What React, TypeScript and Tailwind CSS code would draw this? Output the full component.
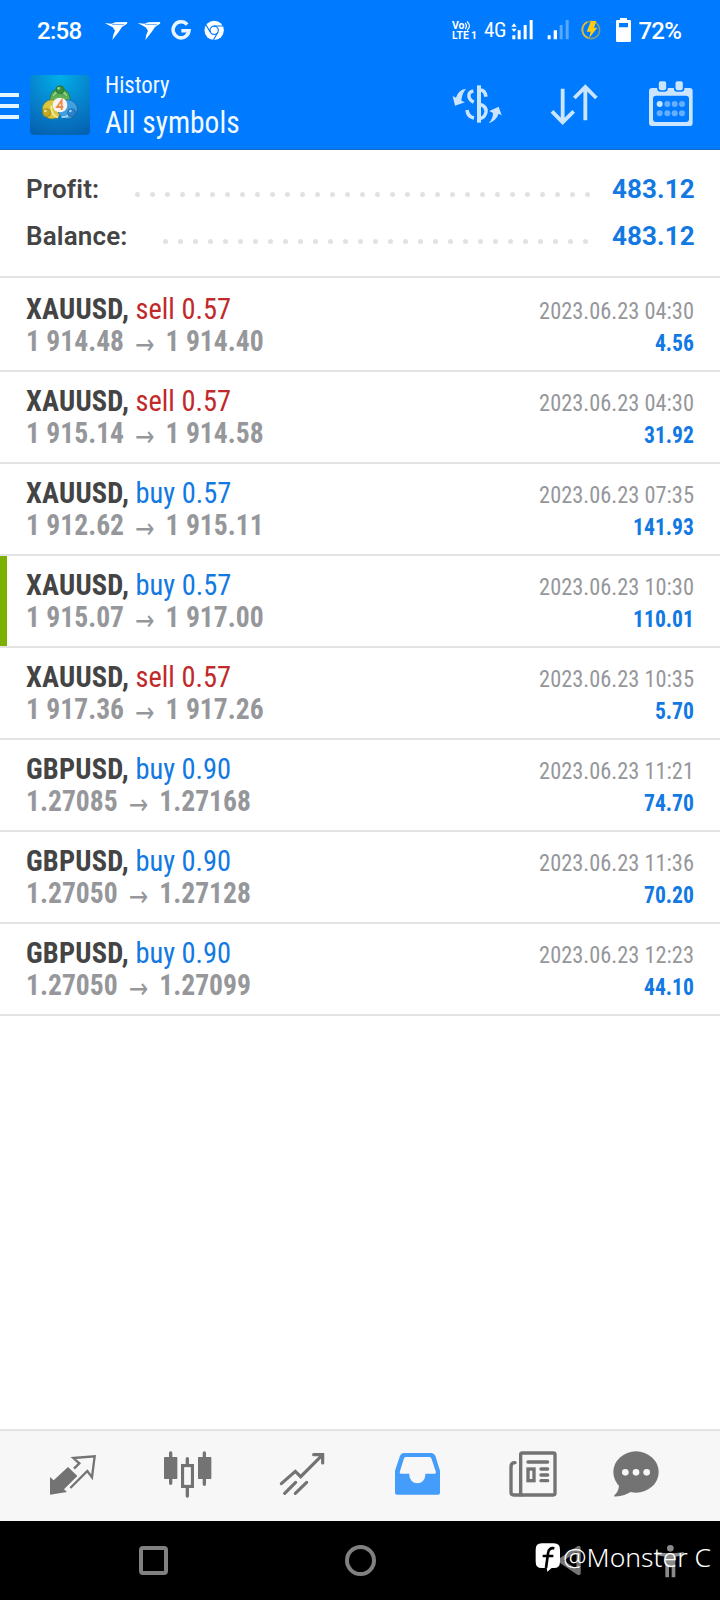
import type { ReactNode } from 'react';

type Deal = {
  symbol: string;
  side: 'buy' | 'sell';
  volume: string;
  open: string;
  close: string;
  time: string;
  profit: string;
  marked?: boolean;
};

const deals: Deal[] = [
  { symbol: 'XAUUSD', side: 'sell', volume: '0.57', open: '1 914.48', close: '1 914.40', time: '2023.06.23 04:30', profit: '4.56' },
  { symbol: 'XAUUSD', side: 'sell', volume: '0.57', open: '1 915.14', close: '1 914.58', time: '2023.06.23 04:30', profit: '31.92' },
  { symbol: 'XAUUSD', side: 'buy', volume: '0.57', open: '1 912.62', close: '1 915.11', time: '2023.06.23 07:35', profit: '141.93' },
  { symbol: 'XAUUSD', side: 'buy', volume: '0.57', open: '1 915.07', close: '1 917.00', time: '2023.06.23 10:30', profit: '110.01', marked: true },
  { symbol: 'XAUUSD', side: 'sell', volume: '0.57', open: '1 917.36', close: '1 917.26', time: '2023.06.23 10:35', profit: '5.70' },
  { symbol: 'GBPUSD', side: 'buy', volume: '0.90', open: '1.27085', close: '1.27168', time: '2023.06.23 11:21', profit: '74.70' },
  { symbol: 'GBPUSD', side: 'buy', volume: '0.90', open: '1.27050', close: '1.27128', time: '2023.06.23 11:36', profit: '70.20' },
  { symbol: 'GBPUSD', side: 'buy', volume: '0.90', open: '1.27050', close: '1.27099', time: '2023.06.23 12:23', profit: '44.10' },
];

function BirdIcon() {
  return (
    <svg viewBox="0 0 72 72" className="size-6" fill="#fff">
      <path d="M2 15 L22 17 L34 13 L70 12 L69 17 L62 22 L54 27 L44 42 L25 66 L28 50 L33 38 L26 28Z" />
      <path d="M24 19 L60 20" stroke="#007aff" strokeWidth="1.8" />
    </svg>
  );
}

function GoogleIcon() {
  return (
    <svg viewBox="0 0 72 72" className="size-6" fill="none" stroke="#e9f6ff" strokeWidth="10.5">
      <path d="M51.5 20 A24 24 0 1 0 57 38.5 H34" />
    </svg>
  );
}

function ChromeIcon() {
  return (
    <svg viewBox="0 0 72 72" className="size-6">
      <circle cx="33.5" cy="37" r="29" fill="#fff" />
      <g fill="none" stroke="#007aff" strokeWidth="3.5">
        <circle cx="33.5" cy="37" r="12.5" />
        <path d="M33 24 H60 M22.5 43 L9 21 M44.5 43 L31 67" />
      </g>
    </svg>
  );
}

function StatusBar() {
  return (
    <div className="flex h-[60px] items-center pl-[37px] text-white">
      <span className="w-[66.5px] pt-px text-[24px] font-medium leading-none tracking-[-0.7px]">2:58</span>
      <div className="flex gap-[9px]">
        <BirdIcon />
        <BirdIcon />
        <GoogleIcon />
        <ChromeIcon />
      </div>
      <div className="ml-[225.5px] w-[32px] pt-px text-[10.5px] font-bold leading-[10px]">
        <div className="flex items-center">
          <span>Vo</span>
          <svg viewBox="0 0 8 10" className="h-[10px] w-2" fill="none" stroke="#fff" strokeWidth="1.2">
            <path d="M0 2 Q3 5 0 8 M2 .5 Q7 5 2 9.5" />
          </svg>
        </div>
        <div className="whitespace-nowrap">LTE<span className="ml-[2px]">1</span></div>
      </div>
      <span className="w-[27px] text-[21px] leading-none tracking-[-0.3px] font-stretch-condensed">4G</span>
      <svg viewBox="0 0 69 60" className="h-5 w-[23px]" fill="#fff">
        <path d="M1 20 L9 10 L17 20Z M1 26 H17 L9 36Z M4 46 H13 V58 H4Z M20 31 H29 V58 H20Z M38 15 H47 V58 H38Z M56 0 H65 V58 H56Z" />
      </svg>
      <svg viewBox="0 0 69 60" className="ml-[13px] h-5 w-[23px]" fill="#fff">
        <path d="M2 46 H11 V58 H2Z M20 31 H30 V58 H20Z" />
        <path d="M38 15 H47 V58 H38Z M56 0 H65 V58 H56Z" opacity=".35" />
      </svg>
      <svg viewBox="0 0 60 60" className="ml-[10.5px] size-5">
        <circle cx="30" cy="30" r="26" fill="none" stroke="#7f9d80" strokeWidth="5" />
        <path d="M18 6 Q3 15 4 31 Q6 48 22 54" fill="none" stroke="#d8bd3c" strokeWidth="5" />
        <path d="M30 3 H46 L39 23 H49 L24 55 L29 35 H17Z" fill="#ffcb14" />
      </svg>
      <svg viewBox="0 0 45 72" className="ml-[15px] h-6 w-[15px]" fill="#fff">
        <path fillRule="evenodd" d="M12 0 H33 V6 H41 Q45 6 45 10 V68 Q45 72 41 72 H4 Q0 72 0 68 V10 Q0 6 4 6 H12Z M9 15 V28 H36 V15Z" />
      </svg>
      <span className="ml-[8px] pt-px text-[24px] font-medium leading-none tracking-[-0.8px]">72%</span>
    </div>
  );
}

function AppLogo() {
  return (
    <svg viewBox="0 0 180 180" className="size-[60px]">
      <defs>
        <radialGradient id="tile" cx=".5" cy=".05" r="1">
          <stop offset="0" stopColor="#00aee8" />
          <stop offset=".55" stopColor="#0781cb" />
          <stop offset="1" stopColor="#0562b2" />
        </radialGradient>
        <linearGradient id="green" x1="0" y1="0" x2="0" y2="1">
          <stop offset="0" stopColor="#3d9b45" />
          <stop offset="1" stopColor="#8acb6a" />
        </linearGradient>
      </defs>
      <rect width="180" height="180" rx="12" fill="url(#tile)" />
      <circle cx="90" cy="70" r="30" fill="url(#green)" stroke="#1d6b3c" strokeWidth="2" />
      <path d="M70 62 Q78 46 90 56 Q102 46 110 62" fill="none" stroke="#a9dc95" strokeWidth="4" />
      <circle cx="66" cy="103" r="29" fill="#d9c63e" stroke="#7d7a24" strokeWidth="2" />
      <circle cx="113" cy="103" r="29" fill="#429fe0" stroke="#145b9b" strokeWidth="2" />
      <path d="M64 92 Q62 119 84 128" fill="none" stroke="#f1e796" strokeWidth="6" />
      <path d="M94 126 Q118 129 130 104" fill="none" stroke="#9ad4f7" strokeWidth="5" />
      <circle cx="90" cy="44" r="12" fill="#358f3e" stroke="#206737" strokeWidth="2" />
      <circle cx="50" cy="113" r="12" fill="#c4a923" stroke="#8c7a1c" strokeWidth="2" />
      <circle cx="125" cy="113" r="12" fill="#2d83cb" stroke="#175b9b" strokeWidth="2" />
      <circle cx="86" cy="40" r="4" fill="#a5d995" />
      <circle cx="46" cy="108" r="4" fill="#f5e68c" />
      <circle cx="121" cy="108" r="4" fill="#9dd6fa" />
      <circle cx="90" cy="90" r="22" fill="#f6f5f2" />
      <path d="M95 105 V76 L81 96 H100" fill="none" stroke="#ee8a4a" strokeWidth="5.5" />
    </svg>
  );
}

function AppHeader() {
  return (
    <div className="flex h-[90px] border-b border-[#1769c7] text-[#f2faff]">
      <div className="mt-[33px] flex w-[19px] flex-col gap-[7px]">
        <div className="h-1 bg-[#e3f6ff]" />
        <div className="h-1 bg-[#e3f6ff]" />
        <div className="h-1 bg-[#e3f6ff]" />
      </div>
      <div className="ml-[11px] mt-[15px] size-[60px]">
        <AppLogo />
      </div>
      <div className="ml-[15px] mt-[11px] w-[345px] shrink-0 font-stretch-condensed">
        <div className="origin-left scale-x-[0.95] text-[24px] leading-[28px]">History</div>
        <div className="mt-[5px] origin-left scale-x-[0.92] text-[32px] leading-[36px]">All symbols</div>
      </div>
      {/* viewBox units are thirds of a pixel */}
      <svg viewBox="270 234 165 156" className="mt-[18px] h-[52px] w-[55px] shrink-0" fill="none" stroke="#cbe5ff">
        <path d="M357 256 V368" strokeWidth="12" />
        <path d="M357 270 Q375 268 378 290 M340 273 Q324 276 327 291 Q329 300 341 307 M357 313 Q380 318 378 336 Q375 354 357 356 M321 330 Q323 350 342 354" strokeWidth="10.5" />
        <g fill="#cbe5ff" stroke="none">
          <path d="M318 267 Q297 267 288 293 L278 288 L285 317 L315 307 L304 302 Q305 282 318 267Z" />
          <path d="M386 370 Q409 361 416 341 L425 346 L416 320 L388 333 L399 339 Q399 356 386 370Z" />
        </g>
      </svg>
      <svg viewBox="564 234 156 156" className="ml-[43px] mt-[18px] size-[52px] shrink-0" fill="none" stroke="#cbe5ff" strokeWidth="11.5">
        <path d="M608 266 V368 M576 334 L608 367 L641 334 M676 361 V260 M643 294 L676 261 L709 294" />
      </svg>
      <svg viewBox="855 234 156 156" className="ml-[45px] mt-[18px] size-[52px] shrink-0" fill="#cbe5ff">
        <path fillRule="evenodd" d="M877 264 H989 Q998 264 998 273 V368 Q998 378 989 378 H877 Q867 378 867 368 V273 Q867 264 877 264Z M888 287 Q879 287 879 296 V357 Q879 366 888 366 H978 Q987 366 987 357 V296 Q987 287 978 287Z" />
        <g stroke="#007aff" strokeWidth="5">
          <rect x="894" y="241" width="27" height="32" rx="8" />
          <rect x="944" y="241" width="27" height="32" rx="8" />
        </g>
        <circle cx="899" cy="312" r="9" />
        <g opacity=".5">
          <circle cx="922" cy="312" r="9" />
          <circle cx="944" cy="312" r="9" />
          <circle cx="966" cy="312" r="9" />
          <circle cx="899" cy="340" r="9" />
          <circle cx="922" cy="340" r="9" />
          <circle cx="944" cy="340" r="9" />
          <circle cx="966" cy="340" r="9" />
        </g>
      </svg>
    </div>
  );
}

function SummaryRow({ label, value, dots, children }: { label: string; value: string; dots: number; children?: ReactNode }) {
  return (
    <div className="flex h-[47px] items-center justify-between text-[26px] font-semibold leading-[30px]">
      <span className="tracking-[0.15px] text-[#444]">{label}</span>
      <span className="ml-auto mt-[11px] flex gap-[10px]">
        {Array.from({ length: dots }, (_, i) => (
          <span key={i} className="size-[5px] rounded-full bg-[#e2e2e2]" />
        ))}
      </span>
      {children}
      <span className="w-[82px] text-right font-bold tracking-[0.1px] text-[#1279e3]">{value}</span>
    </div>
  );
}

function DealRow({ deal }: { deal: Deal }) {
  return (
    <div className="flex h-[92px] justify-between border-b-2 border-[#e3e3e3] pr-[26px] font-stretch-condensed">
      <div className="flex">
        <div className={`h-[90px] w-[7px] ${deal.marked ? 'bg-[#7cb000]' : ''}`} />
        <div className="ml-[19px] mt-[13px] text-[30px] leading-[32px]">
          <div className="origin-left scale-x-[0.947]">
            <span className="font-bold tracking-[0.2px] text-[#444]">{deal.symbol},</span>{' '}
            <span className={deal.side === 'buy' ? 'text-[#1279e3]' : 'text-[#c02a2a]'}>
              {deal.side} {deal.volume}
            </span>
          </div>
          <div className="flex h-[32px] origin-left scale-x-[0.92] items-baseline font-bold text-[#96979b]">
            <span>{deal.open}</span>
            <span className="relative top-[3px] mx-[12px] font-['DejaVu_Sans'] text-[28px] font-normal leading-none">→</span>
            <span>{deal.close}</span>
          </div>
        </div>
      </div>
      <div className="mt-[15px] text-right text-[24px] leading-[32px]">
        <div className="origin-right scale-x-[0.933] text-[#96979b]">{deal.time}</div>
        <div className="origin-right scale-x-[0.9] font-bold text-[#1279e3]">{deal.profit}</div>
      </div>
    </div>
  );
}

function TabBar() {
  return (
    <div className="flex h-[92px] items-center border-t-2 border-[#e3e3e3] bg-[#f7f7f7] pl-[15.5px]">
      <div className="flex w-[115px] justify-center">
        <svg viewBox="141 90 156 156" className="size-[52px]">
          <path d="M150 171 L161 181 L204 141 L232 168 L192 208 L201 216 L150 224Z" fill="#737373" />
          <path d="M211 204 L262 153 L276 172 L284 109 L220 114 L238 130 L222 146" fill="none" stroke="#737373" strokeWidth="7" />
        </svg>
      </div>
      <div className="flex w-[115px] justify-center">
        <svg viewBox="486 90 156 156" className="size-[52px]" fill="#737373" stroke="#737373">
          <g strokeWidth="10" strokeLinecap="round">
            <path d="M512 99 V190 M562 116 V137 M562 200 V228 M613 99 V193" />
          </g>
          <g stroke="none">
            <rect x="492" y="111" width="40" height="66" rx="2" />
            <rect x="594" y="111" width="40" height="66" rx="2" />
          </g>
          <rect x="548" y="137" width="29" height="62" fill="none" strokeWidth="10" />
          <rect x="553" y="142" width="19" height="52" fill="#f7f7f7" stroke="none" />
        </svg>
      </div>
      <div className="flex w-[115px] justify-center">
        <svg viewBox="831 90 156 156" className="size-[52px]" fill="none" stroke="#737373" strokeWidth="9.5" strokeLinecap="round">
          <path d="M844 191 L886 154 L902 170 L966 106 M941 104 H968 V129 M854 220 L887 187 M886 220 L920 187" />
        </svg>
      </div>
      <div className="flex w-[115px] justify-center">
        <svg viewBox="96 90 156 156" className="size-[52px]" fill="#449cfb">
          <path fillRule="evenodd" d="M131 99 H214 Q222 99 226 107 L240 152 V218 Q240 224 234 224 H111 Q105 224 105 218 V152 L120 107 Q124 99 131 99Z M138 111 Q134 111 132 115 L119 157 Q119 161 123 161 H148 V166 A24 24 0 0 0 196 166 V161 H224 Q228 161 228 157 L214 115 Q212 111 208 111Z" />
        </svg>
      </div>
      <div className="flex w-[115px] justify-center">
        <svg viewBox="441 90 156 156" className="size-[52px]" fill="none" stroke="#737373" strokeWidth="10">
          <rect x="482" y="99" width="103" height="126" rx="5" />
          <path d="M465 128 Q453 128 453 140 V217 Q453 225 461 225 H485" strokeLinecap="round" />
          <path d="M504 126 H563 M543 147 H563 M543 165 H563 M543 182 H563" strokeLinecap="round" />
          <rect x="504" y="147" width="18" height="35" />
        </svg>
      </div>
      <div className="flex w-[93px] justify-center">
        <svg viewBox="753 90 156 156" className="size-[52px]">
          <ellipse cx="828" cy="156" rx="68" ry="62" fill="#737373" />
          <path d="M776 190 Q780 212 761 229 Q792 231 815 214Z" fill="#737373" />
          <g fill="#f7f7f7">
            <circle cx="796" cy="157" r="10" />
            <circle cx="828" cy="157" r="10" />
            <circle cx="860" cy="157" r="10" />
          </g>
        </svg>
      </div>
    </div>
  );
}

function SystemNav() {
  return (
    <div className="relative flex h-[79px] items-center bg-black">
      <div className="ml-[139px] size-[29px] rounded-[4px] border-4 border-[#808080]" />
      <div className="ml-[177px] size-[31px] rounded-full border-4 border-[#808080]" />
      <svg viewBox="590 370 78 100" className="ml-[181px] h-[33px] w-[26px]" fill="none" stroke="#757575" strokeWidth="13" strokeLinejoin="round">
        <path d="M655 382 L599 420 L655 458Z" />
      </svg>
      <svg viewBox="886 370 90 102" className="ml-[72px] h-[34px] w-[30px]" fill="#8a8a8a">
        <circle cx="932" cy="383" r="10" />
        <path d="M893 394 Q932 402 972 394 V404 L947 408 V470 H936 V440 H928 V470 H917 V408 L893 404Z" />
      </svg>
      {/* author tag floats above the buttons */}
      <div className="absolute left-[535px] top-[18px] flex items-center text-white">
        <svg viewBox="525 368 78 90" className="h-[30px] w-[26px]">
          <path d="M545 372 H582 Q600 372 600 391 V427 Q600 446 582 446 L575 446 L562 457 L560 446 H545 Q527 446 527 427 V391 Q527 372 545 372Z" fill="#fff" />
          <path d="M583 387 Q566 384 564 402 L558 446 M548 410 H580" fill="none" stroke="#000" strokeWidth="8" />
        </svg>
        <span className="ml-[2px] whitespace-nowrap font-['Noto_Sans'] text-[26.5px] font-[350] leading-[36px]">@Monster C</span>
      </div>
    </div>
  );
}

export default function App() {
  return (
    <div className="flex h-[1600px] w-[720px] flex-col overflow-hidden bg-white font-[Roboto,sans-serif]">
      <div className="bg-[#007aff]">
        <StatusBar />
        <AppHeader />
      </div>
      <div className="h-[128px] border-b-2 border-[#e3e3e3] px-[26px] pt-[15px]">
        <SummaryRow label="Profit:" value="483.12" dots={31}>
          <span className="w-[22px]" />
        </SummaryRow>
        <SummaryRow label="Balance:" value="483.12" dots={29}>
          <span className="w-[24px]" />
        </SummaryRow>
      </div>
      <div className="flex-1 pt-[2px]">
        {deals.map((deal) => (
          <DealRow key={deal.time + deal.open} deal={deal} />
        ))}
      </div>
      <TabBar />
      <SystemNav />
    </div>
  );
}
